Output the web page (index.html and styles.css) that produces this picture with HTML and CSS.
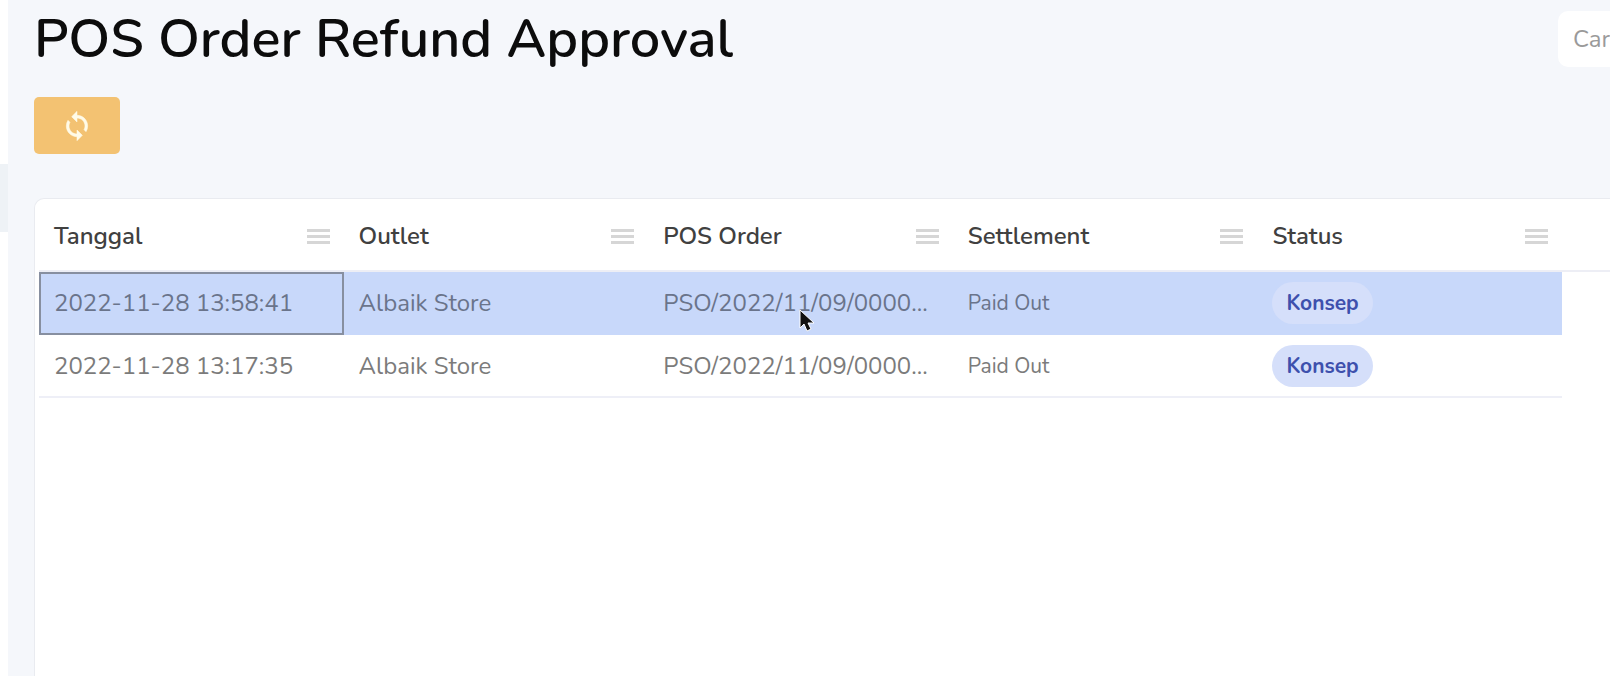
FILE: index.html
```html
<!DOCTYPE html>
<html lang="id">
<head>
<meta charset="utf-8">
<title>POS Order Refund Approval</title>
<link rel="stylesheet" href="styles.css">
</head>
<body>
<div class="app">
  <nav class="sidebar" aria-label="Menu"><a class="sidebar-item" href="#" aria-label="POS Order Refund Approval"></a></nav>
  <main class="content">
    <header class="page-header">
      <h1 class="title">POS Order Refund Approval</h1>
      <input class="search" type="search" placeholder="Cari..." aria-label="Cari">
    </header>
    <div class="toolbar">
      <button class="refresh" type="button" aria-label="Refresh">
        <svg class="refresh-icon" viewBox="0 0 24 24" aria-hidden="true"><path d="M12 4V1L8 5l4 4V6c3.310 0 6 2.690 6 6 0 1.010-.250 1.970-.700 2.800l1.460 1.460A7.930 7.930 0 0 0 20 12c0-4.420-3.580-8-8-8zm0 14c-3.310 0-6-2.690-6-6 0-1.010.250-1.970.700-2.800L5.240 7.740A7.930 7.930 0 0 0 4 12c0 4.420 3.580 8 8 8v3l4-4-4-4v3z"/></svg>
      </button>
    </div>
    <section class="card">
      <div class="head-rule"></div>
      <table class="grid">
        <thead>
          <tr>
            <th><div class="head"><span>Tanggal</span><button class="menu" type="button" aria-label="Menu Tanggal"><i></i><i></i><i></i></button></div></th>
            <th><div class="head"><span>Outlet</span><button class="menu" type="button" aria-label="Menu Outlet"><i></i><i></i><i></i></button></div></th>
            <th><div class="head"><span>POS Order</span><button class="menu" type="button" aria-label="Menu POS Order"><i></i><i></i><i></i></button></div></th>
            <th><div class="head"><span>Settlement</span><button class="menu" type="button" aria-label="Menu Settlement"><i></i><i></i><i></i></button></div></th>
            <th><div class="head"><span>Status</span><button class="menu" type="button" aria-label="Menu Status"><i></i><i></i><i></i></button></div></th>
          </tr>
        </thead>
        <tbody>
          <tr class="selected">
            <td class="focused">2022-11-28 13:58:41</td>
            <td>Albaik Store</td>
            <td class="pointed">PSO/2022/11/09/0000...
              <svg class="pointer" viewBox="0 0 16 24" aria-hidden="true"><path d="M1 1v18l4-4 3 7 4-2-3-6h6z"/></svg>
            </td>
            <td class="small">Paid Out</td>
            <td><span class="badge">Konsep</span></td>
          </tr>
          <tr>
            <td>2022-11-28 13:17:35</td>
            <td>Albaik Store</td>
            <td>PSO/2022/11/09/0000...</td>
            <td class="small">Paid Out</td>
            <td><span class="badge">Konsep</span></td>
          </tr>
        </tbody>
      </table>
    </section>
  </main>
</div>
</body>
</html>
```
FILE: styles.css
```css
* {
  box-sizing: border-box;
}

body {
  margin: 0;
  background: #f5f7fb;
  color: #7b7b7b;
  font-family: Nunito, Lato, sans-serif;
  font-size: 24px;
}

.app {
  display: flex;
  height: 100vh;
  overflow: hidden;
}

.sidebar {
  flex: none;
  width: 8px;
  padding-top: 164px;
  background: #fff;
}

.sidebar-item {
  display: block;
  height: 68px;
  background: #eef2f6;
}

.content {
  display: flex;
  flex: 1;
  flex-direction: column;
  min-width: 0;
  padding-left: 26px;
}

.page-header {
  display: flex;
  align-items: center;
  justify-content: space-between;
  height: 78px;
}

.title {
  margin: 0;
  color: #0c0c0c;
  font-size: 54px;
  font-weight: 600;
  line-height: 64px;
  white-space: nowrap;
}

.search {
  flex: none;
  width: 300px;
  height: 56px;
  margin-right: -248px;
  padding: 0 15px;
  border: 0;
  border-radius: 10px;
  background: #fff;
  font: inherit;
}

.search::placeholder {
  color: #9a9a9a;
  opacity: 1;
}

.toolbar {
  padding: 19px 0 44px;
}

.refresh {
  display: flex;
  align-items: center;
  justify-content: center;
  width: 86px;
  height: 57px;
  padding: 0;
  border: 0;
  border-radius: 5px;
  background: #f3c272;
}

.refresh-icon {
  width: 32px;
  height: 32px;
  fill: #fffbe8;
  stroke: #fffbe8;
  stroke-width: .4;
}

.card {
  flex: 1;
  margin-right: -12px;
  padding: 1px 59px 0 4px;
  border: 1px solid #e9ebf0;
  border-bottom: 0;
  border-radius: 10px 0 0;
  background: #fff;
}

.head-rule {
  height: 72px;
  margin: 0 -59px -72px 0;
  border-bottom: 2px solid #edeef5;
}

.grid {
  width: 100%;
  border-collapse: separate;
  border-spacing: 0;
  table-layout: fixed;
}

.grid th {
  height: 72px;
  padding: 0 14px 0 15px;
  color: #404040;
  font-weight: 600;
  text-align: left;
}

.head {
  display: flex;
  align-items: center;
  justify-content: space-between;
}

.menu {
  display: grid;
  gap: 3px;
  width: 23px;
  padding: 0;
  border: 0;
  background: none;
}

.menu i {
  height: 3px;
  background: #d6d6d6;
}

.grid td {
  height: 63px;
  padding: 0 15px;
  border-bottom: 2px solid #eeeff7;
  white-space: nowrap;
}

.grid .selected td {
  border-bottom-color: #c8d8fa;
  background: #c8d8fa;
  color: #6a748b;
}

.grid .selected .focused {
  padding: 0 15px;
  border-bottom: 2px solid #878fa0;
  box-shadow: inset 2px 2px #878fa0, inset -2px 0 #878fa0;
}

.grid .small {
  font-size: 21px;
}

.pointed {
  position: relative;
}

.pointer {
  position: absolute;
  top: 37px;
  left: 151px;
  width: 16px;
  height: 24px;
  fill: #111;
  stroke: #fff;
  stroke-width: 1;
}

.badge {
  display: inline-block;
  padding: 0 14px;
  border-radius: 21px;
  background: #d5dffa;
  color: #3d50ad;
  font-size: 21px;
  font-weight: 700;
  line-height: 42px;
  vertical-align: middle;
}
```
